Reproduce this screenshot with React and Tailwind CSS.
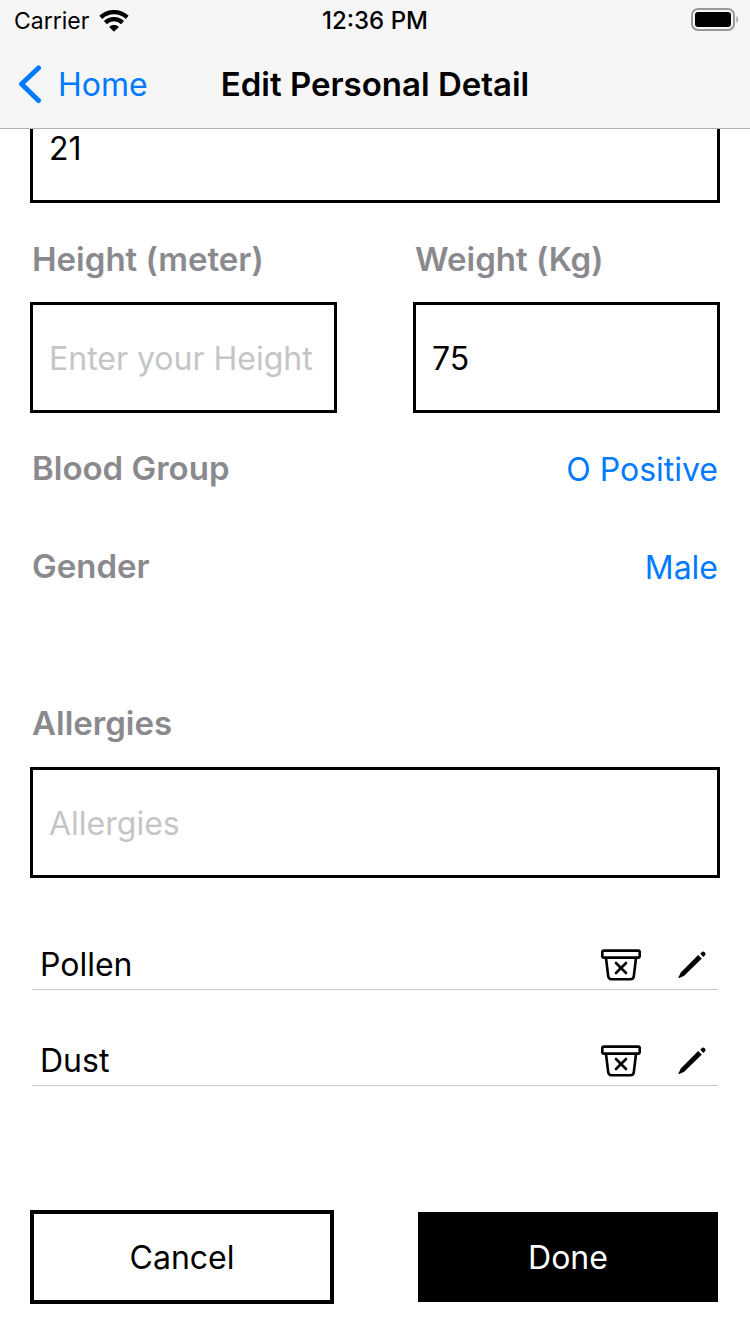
import { useState } from "react";

const fieldClass =
  "block h-[111px] w-full min-w-0 rounded-none border-[3px] border-black bg-white px-4 pt-0.5 text-[32px] text-black outline-none placeholder:text-[#c5c5c7]";
const labelClass = "text-[33px] leading-10 font-semibold text-[#8a8a8e]";
const selectClass =
  "h-10 cursor-pointer appearance-none bg-transparent pt-0.5 text-right text-[32px] leading-10 text-[#007aff] outline-none";

function WifiIcon() {
  return (
    <svg width="30" height="22" viewBox="0 0 30 22" fill="none" aria-hidden="true">
      <path d="M1.8 7.4C9.2 .4 20.8 .4 28.2 7.4" stroke="#000" strokeWidth="4.4" />
      <path d="M6.4 12.6c4.900-4.600 12.300-4.600 17.200 0" stroke="#000" strokeWidth="4.4" />
      <path d="M15 21.8l-4.800-4.800c2.700-2.600 6.900-2.600 9.600 0z" fill="#000" />
    </svg>
  );
}

function BatteryIcon() {
  return (
    <svg width="48" height="24" viewBox="0 0 48 24" fill="none" aria-hidden="true">
      <rect x="2" y="1" width="42" height="21" rx="6" stroke="#999" strokeWidth="2" />
      <rect x="5" y="4" width="36" height="15" rx="3" fill="#000" />
      <path d="M46.500 8c2 1 2 6 0 7z" fill="#999" />
    </svg>
  );
}

function BinIcon() {
  return (
    <svg width="40" height="32" viewBox="0 0 40 32" fill="none" stroke="#000" strokeLinejoin="round" strokeLinecap="round" aria-hidden="true">
      <rect x="1.300" y="1.600" width="37.400" height="7" rx="1.500" strokeWidth="2.600" />
      <path d="M5 9l2.200 18.200c.3 2.200 1.300 3 3.300 3h19c2 0 3-.8 3.300-3L35 9" strokeWidth="2.600" />
      <path d="M15 14l10 10M25 14L15 24" strokeWidth="2.600" />
    </svg>
  );
}

function PencilIcon() {
  return (
    <svg width="28" height="28" viewBox="0 0 28 28" fill="#000" aria-hidden="true">
      <path d="M20.200 4l3.600 3.500L6.200 24.800 1.300 27c-.5.2-1-.3-.8-.8l2.500-4.900z" />
      <path d="M22.200 2.700l1.500-1.500c1.900-1.900 5.100 1.200 3.200 3.200l-1.500 1.500z" />
    </svg>
  );
}

export default function App() {
  const [allergies, setAllergies] = useState(["Pollen", "Dust"]);

  return (
    <div className="min-h-screen bg-white font-['Inter',sans-serif] text-black">
      <header className="relative z-10 border-b border-[#b2b2b2] bg-[#f6f6f6]">
        <div className="grid h-10 grid-cols-3 items-center px-3 text-[24px]">
          <div className="flex items-center gap-2.5 pt-0.5 pl-0.5 text-[23px]">
            <span>Carrier</span>
            <WifiIcon />
          </div>
          <time className="pt-0.5 text-center font-medium">12:36 PM</time>
          <div className="flex justify-end">
            <BatteryIcon />
          </div>
        </div>
        <nav className="grid h-[88px] grid-cols-[1fr_auto_1fr] items-center px-[18px] pt-0.5">
          <a href="#home" className="flex items-center gap-4 text-[32px] text-[#007aff]">
            <svg width="24" height="40" viewBox="0 0 24 40" fill="none" stroke="currentColor" strokeWidth="5" strokeLinecap="round" strokeLinejoin="round" aria-hidden="true">
              <path d="M20.500 3L3.500 19 20.500 35.500" />
            </svg>
            Home
          </a>
          <h1 className="text-[33px] font-semibold">Edit Personal Detail</h1>
        </nav>
      </header>

      <form className="-mt-[37px] px-[30px]" onSubmit={(e) => e.preventDefault()}>
        <input aria-label="Age" defaultValue="21" className={fieldClass} />

        <div className="mt-9 grid grid-cols-2 gap-[76px]">
          <div className="flex flex-col gap-[23px]">
            <label htmlFor="height" className={`${labelClass} pl-0.5`}>Height (meter)</label>
            <input id="height" placeholder="Enter your Height" className={fieldClass} />
          </div>
          <div className="flex flex-col gap-[23px]">
            <label htmlFor="weight" className={`${labelClass} pl-0.5`}>Weight (Kg)</label>
            <input id="weight" defaultValue="75" className={fieldClass} />
          </div>
        </div>

        <div className="mt-[35px] flex flex-col gap-[58px] px-0.5">
          <div className="flex items-center justify-between">
            <label htmlFor="blood" className={labelClass}>Blood Group</label>
            <select id="blood" defaultValue="O Positive" className={selectClass}>
              <option>O Positive</option>
              <option>O Negative</option>
              <option>A Positive</option>
              <option>B Positive</option>
            </select>
          </div>
          <div className="flex items-center justify-between">
            <label htmlFor="gender" className={labelClass}>Gender</label>
            <select id="gender" defaultValue="Male" className={selectClass}>
              <option>Male</option>
              <option>Female</option>
            </select>
          </div>
        </div>

        <div className="mt-[117px] flex flex-col gap-6">
          <label htmlFor="allergies" className={`${labelClass} pl-0.5`}>Allergies</label>
          <input id="allergies" placeholder="Allergies" className={fieldClass} />
        </div>

        <ul className="mt-4 px-0.5">
          {allergies.map((name) => (
            <li key={name} className="flex h-24 items-end justify-between border-b border-[#c6c6c8] pr-3 pb-1 pl-2">
              <span className="text-[32px] leading-10">{name}</span>
              <span className="flex h-10 items-center gap-[37px]">
                <button type="button" aria-label={`Delete ${name}`} onClick={() => setAllergies(allergies.filter((a) => a !== name))}>
                  <BinIcon />
                </button>
                <button type="button" aria-label={`Edit ${name}`}>
                  <PencilIcon />
                </button>
              </span>
            </li>
          ))}
        </ul>

        <div className="mt-[126px] grid grid-cols-2 gap-[86px] px-0.5 pb-8 text-[32px]">
          <button type="button" className="h-[90px] bg-white pt-0.5 outline-4 -outline-offset-2 outline-black">Cancel</button>
          <button type="submit" className="h-[90px] bg-black pt-0.5 text-white">Done</button>
        </div>
      </form>
    </div>
  );
}
